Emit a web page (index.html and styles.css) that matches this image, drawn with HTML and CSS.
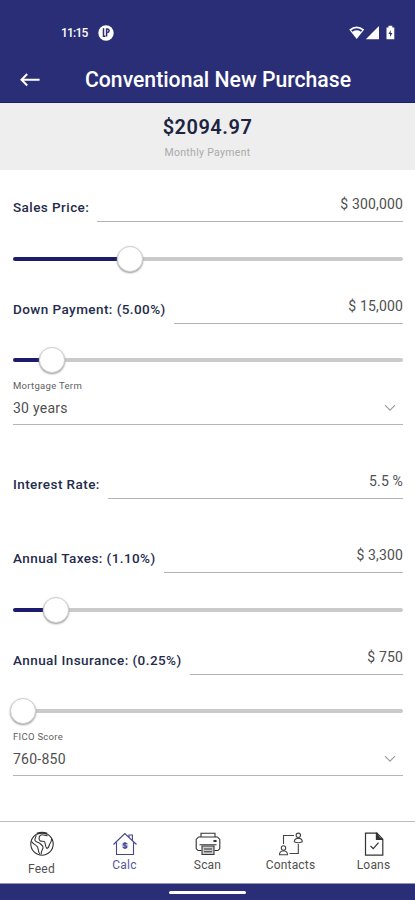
FILE: index.html
```html
<!DOCTYPE html>
<html lang="en">
<head>
<meta charset="utf-8">
<title>Conventional New Purchase</title>
<link rel="stylesheet" href="styles.css">
</head>
<body>
<div class="app">
  <header class="top">
    <div class="status">
      <span class="clock">11:15</span>
      <svg class="notice" width="16" height="16" viewBox="0 0 16 16"><circle cx="8" cy="8" r="7.7" fill="#fff"/><path d="M5.5 3.3v8h2M8.6 11.5V4h.8a1.7 1.7 0 0 1 0 3.4" fill="none" stroke="#2a2e76" stroke-width="1.5"/></svg>
      <svg class="signals" width="50" height="16" viewBox="0 0 50 16" fill="#fff"><path d="M1.2 4.6Q8.7-1.5 16.2 4.6L8.7 14z"/><path d="M3.2 5.3Q8.7 1.3 14.2 5.3L12.9 6.8Q8.7 3.9 4.5 6.8z" fill="#2a2e76"/><path d="M31 1v13.2H17.8z"/><path d="M38.5 2.4h2V.8h3.8v1.6h2v11.9h-7.8z"/><path d="m42.7 5-2.2 4h1.6v3l2.3-4.1h-1.7z" fill="#2a2e76"/></svg>
    </div>
    <div class="titlebar">
      <svg class="back" width="20" height="14" viewBox="0 0 20 14"><path d="M7.2 1 1.5 6.8l5.7 5.7M1.6 6.8h18" fill="none" stroke="#fff" stroke-width="2"/></svg>
      <h1 class="title">Conventional New Purchase</h1>
    </div>
  </header>
  <section class="summary">
    <div class="amount">$2094.97</div>
    <div class="caption">Monthly Payment</div>
  </section>
  <main class="form">
    <div class="field"><label class="label">Sales Price:</label><div class="value">$ 300,000</div></div>
    <div class="slider"><div class="fill" style="width:117px"></div><div class="knob"></div><div class="rest"></div></div>
    <div class="field"><label class="label">Down Payment: (5.00%)</label><div class="value">$ 15,000</div></div>
    <div class="slider"><div class="fill" style="width:39px"></div><div class="knob"></div><div class="rest"></div></div>
    <div class="select"><div class="hint">Mortgage Term</div><div class="choice"><span>30 years</span><svg width="12" height="8" viewBox="0 0 12 8"><path d="m1 1.2 5 5 5-5" fill="none" stroke="#999" stroke-width="1.1"/></svg></div></div>
    <div class="field spaced"><label class="label">Interest Rate:</label><div class="value">5.5 %</div></div>
    <div class="field spaced"><label class="label">Annual Taxes: (1.10%)</label><div class="value">$ 3,300</div></div>
    <div class="slider"><div class="fill" style="width:43px"></div><div class="knob"></div><div class="rest"></div></div>
    <div class="field"><label class="label">Annual Insurance: (0.25%)</label><div class="value">$ 750</div></div>
    <div class="slider"><div class="fill" style="width:10px"></div><div class="knob"></div><div class="rest"></div></div>
    <div class="select"><div class="hint">FICO Score</div><div class="choice"><span>760-850</span><svg width="12" height="8" viewBox="0 0 12 8"><path d="m1 1.2 5 5 5-5" fill="none" stroke="#999" stroke-width="1.1"/></svg></div></div>
  </main>
  <nav class="tabs">
    <div class="tab feed">
      <svg width="26" height="26" viewBox="0 0 26 26" fill="none" stroke="#333" stroke-width="1.1"><circle cx="13" cy="13" r="11.2"/><path d="M7 3.8C7.6 6 5.2 7.4 6 9.5c.7 1.7 3.5 1.5 5 3 1.6 1.5 3.6 2.2 3 4.3-.5 2-2 3.8-2 6.8M2.5 10.5c1.5 2.7 4.5 3 6 5.5 1.2 2 .2 4.5 2.3 7"/><path d="M11.5 4.2c2.5-1.4 4.5.8 7 .4M11.5 4.2c-1.8 1.7-2 4.3-.4 5.6 1.5 1.1 4-.4 4.7 1.3.6 1.5.3 4.9 2.2 6.4 2.6-.9 1.7-3.7 3.3-5.5 1-1.1 1.4-2.5 1.2-4"/><path d="M8 2.8q5-2 10 0" stroke-width="2"/></svg>
      <span>Feed</span>
    </div>
    <div class="tab active">
      <svg width="26" height="26" viewBox="0 0 26 26" fill="none" stroke="#44468c" stroke-width="1.1"><path d="m1.5 13.5 11.3-11 11.7 11M4.5 11.5v12h17v-12M17 6.2V4h3.4v5.5"/><circle cx="13" cy="14.5" r="3.4" fill="#c5c7e0" stroke="none"/><path d="M14.8 12.8c-1-1-3.5-.7-3.5.6 0 1.6 3.5.7 3.5 2.3 0 1.3-2.6 1.6-3.7.4M13 11v7"/></svg>
      <span>Calc</span>
    </div>
    <div class="tab">
      <svg width="26" height="26" viewBox="0 0 26 26" fill="none" stroke="#333" stroke-width="1.1"><path d="M6 6V2.3h14V6M6.5 19.5H3l-1.8-2V8.5L3.5 6h19l2.3 2.5v9l-1.8 2h-3.5"/><path d="M7 15v8.5h12V15z" fill="#ccc"/><path d="M4.5 13.8h17M9 18h8M9 20.7h8"/><path d="M19 9.5h2v1h-2z" fill="#222"/></svg>
      <span>Scan</span>
    </div>
    <div class="tab">
      <svg width="26" height="26" viewBox="0 0 26 26" fill="none" stroke="#444" stroke-width="1.1"><path d="M5.5 13V4.5H16M11.5 22.5h8.8V13"/><circle cx="20.3" cy="4.3" r="2.2"/><path d="M16.3 10.8q0-3.4 4-3.7 4 .3 4 3.7-4 1.8-8 0zM1.5 23.8q0-3.8 4-4.1 4 .3 4 4.1z"/><circle cx="5.5" cy="17" r="2.2"/></svg>
      <span>Contacts</span>
    </div>
    <div class="tab">
      <svg width="26" height="26" viewBox="0 0 26 26" fill="none" stroke="#333" stroke-width="1.2"><path d="M4.5 2.2H16l5.8 6v16H4.5zM15.5 2.5v6h6"/><path d="m15.5 2.5 2.8 4.2 2.5 1.4-5.3-.1z" fill="#333"/><path d="m9.5 15 2.8 2.7 5.2-6"/></svg>
      <span>Loans</span>
    </div>
  </nav>
  <footer class="home"><div class="pill"></div></footer>
</div>
</body>
</html>
```
FILE: styles.css
```css
* { box-sizing: border-box; }
body { margin: 0; font-family: Roboto, "Liberation Sans", sans-serif; background: #fff; }
svg { display: block; flex: none; }
.app { width: 415px; height: 900px; display: flex; flex-direction: column; overflow: hidden; }
.top { height: 103px; flex: none; background: #2a2e76; border-bottom: 1px solid #1c2068; color: #fff; }
.status { height: 56px; padding: 25px 17px 0 61px; display: flex; align-items: flex-start; }
.clock { width: 37px; font-size: 12px; font-weight: 500; line-height: 17px; letter-spacing: -.8px; white-space: nowrap; }
.signals { margin-left: auto; }
.titlebar { height: 47px; display: flex; align-items: center; padding-left: 20px; }
.back { margin-right: 45px; }
.title { margin: 0; font-size: 21.2px; font-weight: 500; line-height: 28px; white-space: nowrap; }
.summary { height: 67px; flex: none; background: #eee; text-align: center; padding-top: 11px; }
.amount { color: #1c2440; font-size: 20px; font-weight: 600; line-height: 26px; letter-spacing: .5px; }
.caption { color: #aaa; font-size: 10.5px; line-height: 14px; margin-top: 6px; letter-spacing: .3px; }
.form { height: 651px; flex: none; padding: 12px 12px 0 13px; }
.field { height: 40px; display: flex; gap: 8px; }
.label { flex: none; color: #252b4c; font-size: 13.5px; font-weight: 500; line-height: 20px; padding-top: 15px; letter-spacing: .43px; white-space: nowrap; }
.value { flex: 1; text-align: right; color: #505050; font-size: 14px; line-height: 20px; padding-top: 12px; letter-spacing: .15px; border-bottom: 1px solid #b4b4b4; white-space: nowrap; }
.slider { height: 61.5px; display: flex; align-items: center; padding-top: 12px; }
.fill, .rest { height: 4px; background: #1d1b6c; border-radius: 2px; }
.rest { flex: 1; background: #cacaca; }
.knob { flex: none; width: 26px; height: 26px; margin: 0 -13px; border-radius: 50%; background: #fff; border: 1px solid #d0d0d0; box-shadow: 0 1px 2px #999; z-index: 1; }
.select { height: 45.5px; border-bottom: 1px solid #b4b4b4; }
.hint { color: #606060; font-size: 9.5px; line-height: 12px; letter-spacing: .3px; margin-top: -5.5px; }
.choice { display: flex; justify-content: space-between; align-items: center; height: 20px; margin-top: 6px; padding-right: 7px; color: #505050; font-size: 14px; letter-spacing: .25px; }
.spaced { margin-top: 34px; }
.tabs { height: 62px; flex: none; display: flex; border-top: 1px solid #bdbdbd; background: #fff; }
.tab { width: 83px; display: flex; flex-direction: column; align-items: center; padding-top: 9px; color: #505050; font-size: 12px; letter-spacing: .2px; }
.tab span { line-height: 16px; }
.feed span { margin-top: 4px; }
.active { color: #5557a0; }
.home { flex: 1; background: #2a2e76; border-top: 1px solid #9092b8; display: flex; justify-content: center; padding-top: 7px; }
.pill { width: 77px; height: 3px; border-radius: 2px; background: #fff; }
```
